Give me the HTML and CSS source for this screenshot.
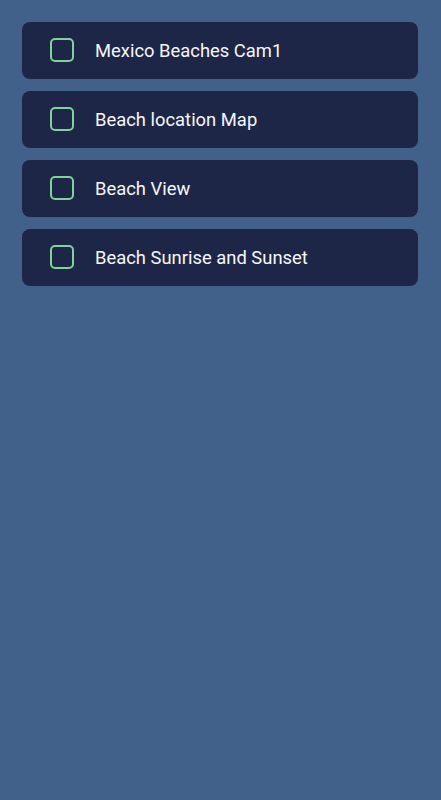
FILE: index.html
```html
<!DOCTYPE html>
<html>
<head>
<meta charset="utf-8">
<link rel="stylesheet" href="styles.css">
</head>
<body>
<div class="list">
  <div class="item"><span class="check"></span><span class="label">Mexico Beaches Cam1</span></div>
  <div class="item"><span class="check"></span><span class="label">Beach location Map</span></div>
  <div class="item"><span class="check"></span><span class="label">Beach View</span></div>
  <div class="item"><span class="check"></span><span class="label">Beach Sunrise and Sunset</span></div>
</div>
</body>
</html>
```
FILE: styles.css
```css
html, body {
  margin: 0;
  padding: 0;
  background: #41608a;
  height: 100%;
}
body {
  font-family: Roboto, "Noto Sans", sans-serif;
}
.list {
  display: flex;
  flex-direction: column;
  gap: 12px;
  padding: 22px 23px 0 22px;
}
.item {
  height: 57px;
  box-sizing: border-box;
  background: #1e2647;
  border-radius: 8px;
  display: flex;
  align-items: center;
  padding-left: 28px;
}
.check {
  width: 24px;
  height: 24px;
  box-sizing: border-box;
  border: 2.5px solid #7fd39a;
  border-radius: 5px;
  flex: none;
  margin-bottom: 2px;
}
.label {
  margin-left: 21px;
  color: #f6f7fa;
  font-size: 18.4px;
}
```
